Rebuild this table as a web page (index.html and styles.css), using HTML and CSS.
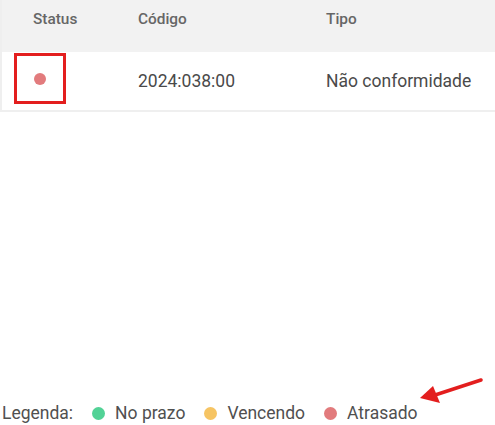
FILE: index.html
```html
<!DOCTYPE html>
<html lang="pt">
<head>
  <meta charset="UTF-8">
  <title>Ocorrências</title>
  <link rel="stylesheet" href="styles.css">
</head>
<body>

  <div class="page">
    <!-- Tabela -->
    <table class="grid">
      <colgroup>
        <col class="c-status">
        <col class="c-codigo">
        <col>
      </colgroup>
      <thead>
        <tr>
          <th class="col-status">Status</th>
          <th>Código</th>
          <th>Tipo</th>
        </tr>
      </thead>
      <tbody>
        <tr>
          <td class="col-status">
            <span class="dot atrasado"></span>
            <span class="mark"></span>
          </td>
          <td>2024:038:00</td>
          <td>Não conformidade</td>
        </tr>
      </tbody>
    </table>

    <!-- Legenda -->
    <div class="legend">
      <span class="legend-label">Legenda:</span>
      <span class="legend-item"><span class="dot no-prazo"></span>No prazo</span>
      <span class="legend-item"><span class="dot vencendo"></span>Vencendo</span>
      <span class="legend-item"><span class="dot atrasado"></span>Atrasado</span>
    </div>

    <svg class="arrow" width="80" height="40" viewBox="0 0 80 40">
      <line x1="63" y1="8" x2="14" y2="24" stroke="#e31e1e" stroke-width="3.5" stroke-linecap="round"/>
      <polygon points="2,26 15,14 22,31" fill="#e31e1e"/>
    </svg>
  </div>

</body>
</html>
```

FILE: styles.css
```css
body {
  margin: 0;
  background: #fff;
  font-family: Roboto, 'Noto Sans', sans-serif;
  color: #4a4a4a;
}

.page {
  position: relative;
  height: 425px;
  display: flex;
  flex-direction: column;
  justify-content: space-between;
  overflow: hidden;
}

.grid {
  width: 540px;
  table-layout: fixed;
  border-collapse: collapse;
  border-left: 2px solid #efefef;
  border-bottom: 2px solid #efefef;
}

.c-status {
  width: 137px;
}

.c-codigo {
  width: 188px;
}

.grid th {
  box-sizing: border-box;
  background: #f2f2f2;
  color: #666;
  font-size: 15.4px;
  font-weight: 500;
  text-align: left;
  height: 52px;
  padding: 10px 0 0 0;
  vertical-align: top;
}

.grid td {
  box-sizing: border-box;
  height: 59px;
  padding: 0;
  font-size: 17.5px;
  color: #4a4a4a;
  vertical-align: middle;
}

.grid .col-status {
  padding-left: 31px;
  position: relative;
}

.dot {
  display: inline-block;
  width: 12px;
  height: 12px;
  border-radius: 50%;
  vertical-align: middle;
}

.grid td .dot {
  margin-left: 1px;
  margin-top: -6px;
}

.no-prazo { background: #52d296; }
.vencendo { background: #f6c463; }
.atrasado { background: #e27b7d; }

.mark {
  position: absolute;
  left: 12px;
  top: 1px;
  width: 46px;
  height: 45px;
  border: 3px solid #e31e1e;
}

.legend {
  display: flex;
  align-items: center;
  padding: 0 0 0 2px;
  font-size: 17.5px;
  color: #505050;
  height: 24px;
}

.legend-label {
  margin-right: 19px;
}

.legend-item {
  display: flex;
  align-items: center;
  margin-right: 19px;
}

.legend-item .dot {
  width: 13px;
  height: 13px;
  margin-right: 10px;
}

.arrow {
  position: absolute;
  left: 418px;
  top: 372px;
}
```
